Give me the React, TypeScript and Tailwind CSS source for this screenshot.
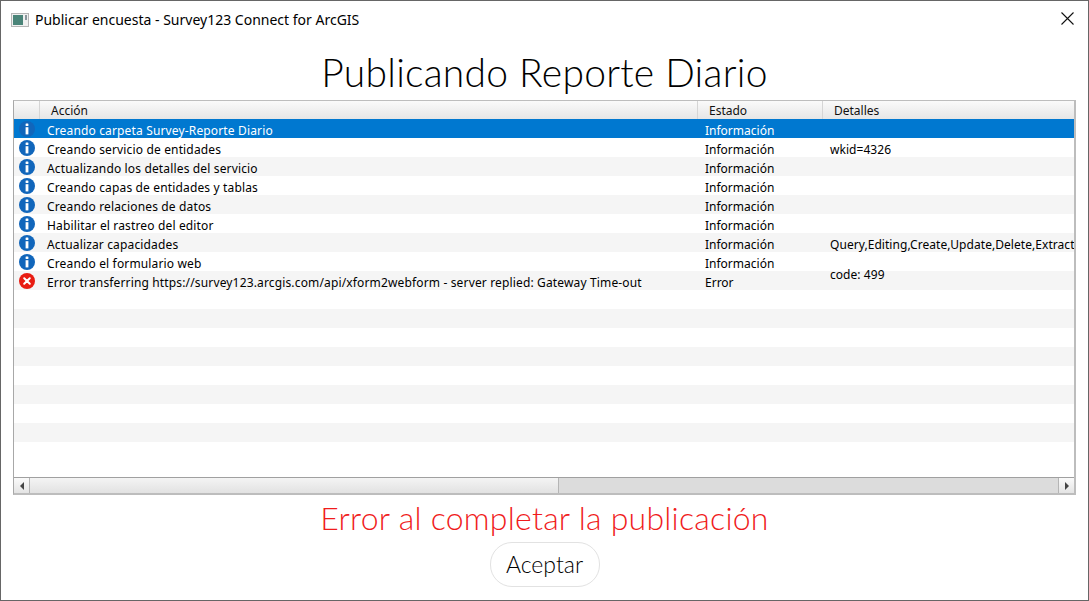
const rows = [
  { icon: "info", action: "Creando carpeta Survey-Reporte Diario", state: "Información", details: "" },
  { icon: "info", action: "Creando servicio de entidades", state: "Información", details: "wkid=4326" },
  { icon: "info", action: "Actualizando los detalles del servicio", state: "Información", details: "" },
  { icon: "info", action: "Creando capas de entidades y tablas", state: "Información", details: "" },
  { icon: "info", action: "Creando relaciones de datos", state: "Información", details: "" },
  { icon: "info", action: "Habilitar el rastreo del editor", state: "Información", details: "" },
  { icon: "info", action: "Actualizar capacidades", state: "Información", details: "Query,Editing,Create,Update,Delete,Extract" },
  { icon: "info", action: "Creando el formulario web", state: "Información", details: "" },
  {
    icon: "error",
    action: "Error transferring https://survey123.arcgis.com/api/xform2webform - server replied: Gateway Time-out",
    state: "Error",
    details: "code: 499",
  },
];

const InfoIcon = () => (
  <svg width="16" height="16" viewBox="0 0 16 16">
    <circle cx="8" cy="8" r="8" fill="#1166bb" />
    <rect x="6.6" y="2.4" width="2.8" height="2.6" rx="0.6" fill="#fff" />
    <rect x="6.6" y="6.2" width="2.8" height="7.2" fill="#fff" />
  </svg>
);

const ErrorIcon = () => (
  <svg width="16" height="16" viewBox="0 0 16 16">
    <circle cx="8" cy="8" r="8" fill="#e81c12" />
    <path d="M5.2 5.2 L10.8 10.8 M10.8 5.2 L5.2 10.8" stroke="#fff" strokeWidth="2" strokeLinecap="round" />
  </svg>
);

const HeaderCell = ({ label, className }: { label: string; className: string }) => (
  <div className={`flex h-[18px] items-center border-r border-[#d5d5d5] pt-[1px] ${className}`}>{label}</div>
);

const App = () => (
  <div className="flex h-[601px] w-[1089px] flex-col overflow-hidden border border-[#666] bg-white font-['Noto_Sans',sans-serif] text-black">
    <div className="flex h-[37px] shrink-0 items-center pl-[10px] pr-[14px]">
      <svg width="18" height="14" viewBox="0 0 18 14" className="mr-[6px]">
        <rect x="0.5" y="0.5" width="17" height="13" fill="#f0f0f0" stroke="#b5b5b5" />
        <rect x="2" y="2" width="10" height="10" fill="#4a8478" />
        <rect x="14" y="2" width="2" height="5" fill="#8a969c" />
      </svg>
      <span className="text-[14px] leading-none">Publicar encuesta - Survey123 Connect for ArcGIS</span>
      <svg width="13" height="13" viewBox="0 0 13 13" className="mb-[3px] ml-auto">
        <path d="M0.5 0.5 L12.5 12.5 M12.5 0.5 L0.5 12.5" stroke="#111" strokeWidth="1.1" />
      </svg>
    </div>

    <h1 className="h-[62px] shrink-0 pt-[3px] text-center font-['Lato',sans-serif] text-[39px] font-light leading-[62px] tracking-[0.25px]">
      Publicando Reporte Diario
    </h1>

    <div className="mx-[12px] flex h-[395px] w-[1063px] shrink-0 flex-col border-2 border-t border-l border-[#bdbdbd] border-l-[#a8a8a8] text-[12px]">
      <div className="flex h-[18px] shrink-0 bg-gradient-to-b from-[#fafafa] to-[#e6e6e6] leading-none text-[#111]">
        <HeaderCell label="" className="w-[26px]" />
        <HeaderCell label="Acción" className="w-[658px] pl-[11px]" />
        <HeaderCell label="Estado" className="w-[125px] pl-[11px]" />
        <div className="flex h-[18px] items-center pl-[11px] pt-[1px]">Detalles</div>
      </div>

      <div className="flex-1 overflow-hidden">
        {rows.map((row, i) => (
          <div
            key={row.action}
            className={`flex h-[19px] items-center whitespace-nowrap ${
              i === 0 ? "bg-[#0078d0] text-white" : i % 2 === 0 ? "bg-[#f5f5f5]" : "bg-white"
            }`}
          >
            <div className="flex w-[26px] shrink-0 justify-center pr-[1px]">
              {row.icon === "info" ? <InfoIcon /> : <ErrorIcon />}
            </div>
            <div className="w-[658px] shrink-0 pl-[7px] pt-[4px] tracking-[0.15px]">{row.action}</div>
            <div className="w-[125px] shrink-0 pl-[7px] pt-[4px]">{row.state}</div>
            <div
              className={`min-w-0 flex-1 pl-[7px] pt-[4px] tracking-[0.05px] ${
                row.icon === "error" ? "-translate-y-[8px]" : ""
              }`}
            >
              {row.details}
            </div>
          </div>
        ))}
        {[9, 10, 11, 12, 13, 14, 15, 16].map((n) => (
          <div key={n} className={`h-[19px] ${n % 2 === 0 ? "bg-[#f5f5f5]" : "bg-white"}`} />
        ))}
      </div>

      <div className="flex h-[16px] shrink-0 border-t border-[#a0a0a0] bg-[#dcdcdc]">
        <div className="flex w-[16px] items-center justify-center border-r border-[#b5b5b5] bg-gradient-to-b from-[#fafafa] to-[#e4e4e4]">
          <div className="h-0 w-0 border-y-[4px] border-r-[4px] border-y-transparent border-r-[#444]" />
        </div>
        <div className="w-[529px] border-r border-[#b5b5b5] bg-gradient-to-b from-[#f4f4f4] to-[#e2e2e2]" />
        <div className="flex-1" />
        <div className="flex w-[16px] items-center justify-center border-l border-[#b5b5b5] bg-gradient-to-b from-[#fafafa] to-[#e4e4e4]">
          <div className="h-0 w-0 border-y-[4px] border-l-[4px] border-y-transparent border-l-[#444]" />
        </div>
      </div>
    </div>

    <div className="h-[45px] shrink-0 text-center font-['Lato',sans-serif] text-[32px] font-light leading-[45px] tracking-[0.25px] text-[#f01c1c]">
      Error al completar la publicación
    </div>

    <div className="flex justify-center pt-[2px]">
      <button className="h-[45px] w-[110px] rounded-[22px] border border-[#e2e2e2] bg-white font-['Lato',sans-serif] text-[23px] font-light">
        Aceptar
      </button>
    </div>
  </div>
);

export default App;
